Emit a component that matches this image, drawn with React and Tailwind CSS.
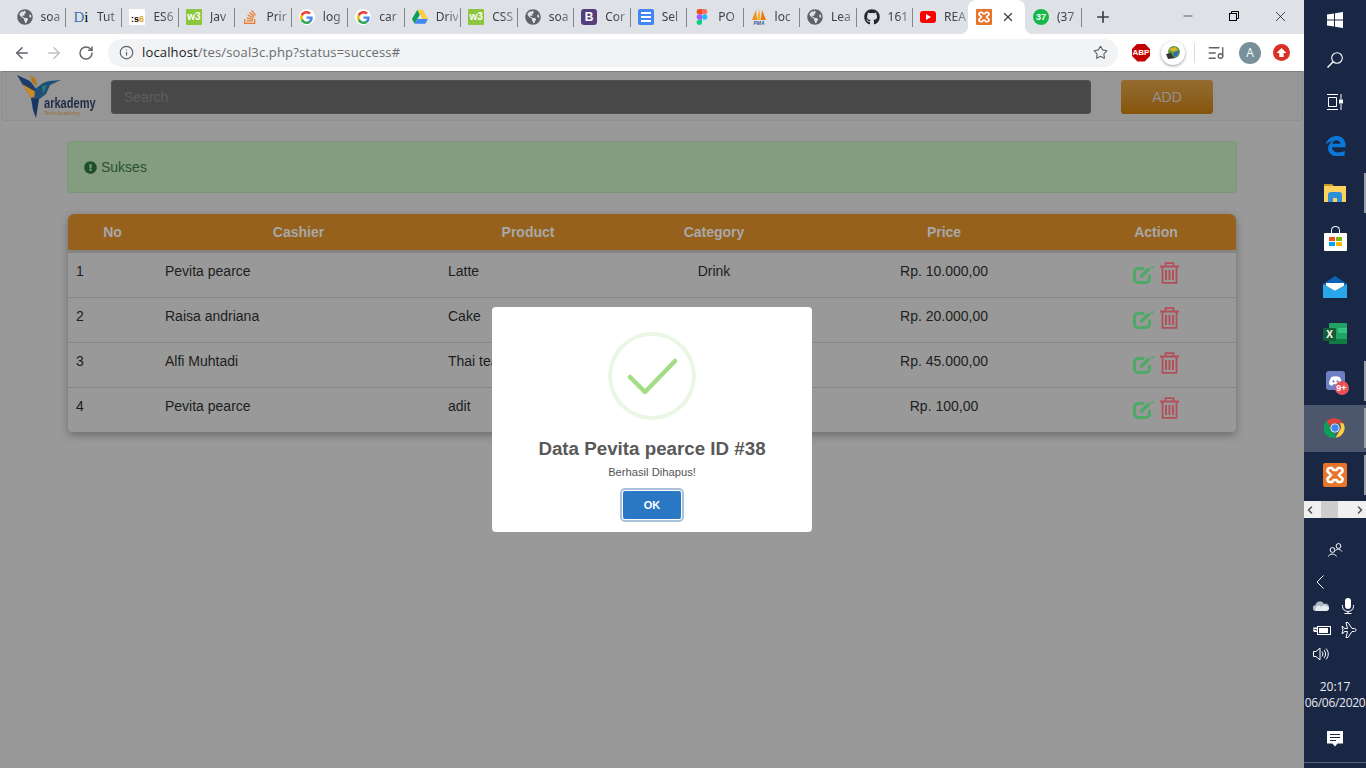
import { ArrowLeft, ArrowRight, RotateCw, Star, Info, Plus, X, Minus, ListMusic, ChevronLeft, ChevronRight } from "lucide-react";
import { FaGlobeAmericas, FaGithub, FaStackOverflow, FaExclamationCircle } from "react-icons/fa";

function Globe() {
  return <FaGlobeAmericas className="w-4 h-4 text-[#5f6368]" />;
}

function GoogleG() {
  return (
    <svg viewBox="0 0 48 48" className="w-[13px] h-[13px]">
      <path fill="#ea4335" d="M24 9.500c3.500 0 6.700 1.200 9.200 3.600l6.900-6.900C35.900 2.400 30.400 0 24 0 14.600 0 6.500 5.400 2.600 13.200l8 6.200C12.500 13.700 17.800 9.500 24 9.500z" />
      <path fill="#4285f4" d="M47 24.500c0-1.600-.1-3.100-.4-4.500H24v9h13c-.6 3-2.200 5.500-4.800 7.200l7.700 6C44.400 38 47 31.800 47 24.500z" />
      <path fill="#fbbc05" d="M10.600 28.600c-.5-1.400-.8-3-.8-4.600s.3-3.200.8-4.600l-8-6.200C.9 16.500 0 20.100 0 24s.9 7.500 2.600 10.800l8-6.200z" />
      <path fill="#34a853" d="M24 48c6.500 0 11.900-2.100 15.900-5.800l-7.700-6c-2.200 1.500-4.900 2.300-8.200 2.300-6.200 0-11.500-4.200-13.400-9.900l-8 6.200C6.500 42.600 14.600 48 24 48z" />
    </svg>
  );
}

function W3() {
  return (
    <div className="w-4 h-4 bg-[#8cc63f] rounded-[1px] flex items-center justify-center text-white text-[10px] leading-none font-bold font-['Liberation_Sans',sans-serif]">
      w3
    </div>
  );
}

function Drive() {
  return (
    <svg viewBox="0 0 24 22" className="w-4 h-4">
      <polygon fill="#0f9d58" points="8,0 0,14 4,21 12,7" />
      <polygon fill="#ffcd40" points="8,0 16,0 24,14 16,14" />
      <polygon fill="#4285f4" points="4,21 8,14 24,14 20,21" />
    </svg>
  );
}

function Figma() {
  return (
    <svg viewBox="0 0 12 18" className="w-4 h-4">
      <path fill="#f24e1e" d="M3 0h3v6H3a3 3 0 0 1 0-6z" />
      <path fill="#ff7262" d="M6 0h3a3 3 0 0 1 0 6H6z" />
      <path fill="#a259ff" d="M3 6h3v6H3a3 3 0 0 1 0-6z" />
      <circle fill="#1abcfe" cx="9" cy="9" r="3" />
      <path fill="#0acf83" d="M3 12h3v3a3 3 0 1 1-3-3z" />
    </svg>
  );
}

function Pma() {
  return (
    <svg viewBox="0 0 16 16" className="w-4 h-4">
      <polygon fill="#f29111" points="1,11 5,1 6,11" />
      <polygon fill="#f7b23b" points="6,11 8,0 10,11" />
      <polygon fill="#e9780c" points="10,11 11,1 15,11" />
      <text x="8" y="16" textAnchor="middle" fontSize="5" fontWeight="700" fontStyle="italic" fill="#3d5a98" fontFamily="Liberation Sans">PMA</text>
    </svg>
  );
}

function Xampp({ size = "w-4 h-4" }) {
  return (
    <svg viewBox="0 0 24 24" className={size}>
      <rect width="24" height="24" rx="2" fill="#e8742a" />
      <path fill="none" stroke="#fff" strokeWidth="2.600" d="M9 5H7a2.500 2.500 0 0 0-1 4.800L8 12l-2 2.200A2.500 2.500 0 0 0 7 19h2l1.500-2h3L15 19h2a2.500 2.500 0 0 0 1-4.800L16 12l2-2.200A2.500 2.500 0 0 0 17 5h-2l-1.500 2h-3z" />
    </svg>
  );
}

const tabs = [
  { icon: <Globe />, label: "soa" },
  { icon: <span className="text-[15px] leading-none text-[#3b73b9] font-['Liberation_Serif',serif]">D<span className="text-black">i</span></span>, label: "Tut" },
  { icon: <div className="w-4 h-4 bg-white flex items-end justify-center text-[9px] leading-[12px] font-bold font-['Liberation_Sans',sans-serif]">:s<span className="text-[#e8a317]">6</span></div>, label: "ES6" },
  { icon: <W3 />, label: "Jav" },
  { icon: <FaStackOverflow className="w-4 h-4 text-[#e87c2c]" />, label: "Prir" },
  { icon: <div className="w-4 h-4 rounded-full bg-white flex items-center justify-center"><GoogleG /></div>, label: "log" },
  { icon: <div className="w-4 h-4 rounded-full bg-white flex items-center justify-center"><GoogleG /></div>, label: "car" },
  { icon: <Drive />, label: "Driv" },
  { icon: <W3 />, label: "CSS" },
  { icon: <Globe />, label: "soa" },
  { icon: <div className="w-4 h-4 rounded-[3px] bg-[#563d7c] text-white text-[12px] leading-4 text-center font-bold font-['Liberation_Sans',sans-serif]">B</div>, label: "Cor" },
  {
    icon: (
      <div className="w-4 h-4 rounded-[2px] bg-[#4285f4] flex flex-col justify-center gap-[2px] px-[3px]">
        <div className="h-[2px] bg-white"></div>
        <div className="h-[2px] bg-white"></div>
        <div className="h-[2px] bg-white"></div>
      </div>
    ),
    label: "Sel",
  },
  { icon: <Figma />, label: "PO" },
  { icon: <Pma />, label: "loc" },
  { icon: <Globe />, label: "Lea" },
  { icon: <FaGithub className="w-4 h-4 text-[#24292e]" />, label: "161" },
  {
    icon: (
      <div className="w-4 h-[12px] rounded-[3px] bg-[#ff0000] flex items-center justify-center">
        <div className="w-0 h-0 border-y-[3px] border-y-transparent border-l-[5px] border-l-white"></div>
      </div>
    ),
    label: "REA",
  },
  { icon: <Xampp />, active: true },
  { icon: <div className="w-4 h-4 rounded-full bg-[#16b84a] text-white text-[9px] leading-4 text-center font-bold font-['Liberation_Sans',sans-serif]">37</div>, label: "(37" },
];

function TabBar() {
  return (
    <div className="h-[34px] bg-[#dee1e6] flex pl-[8.5px] shrink-0">
      {tabs.map((t, i) => (
        <div
          key={i}
          className={
            t.active
              ? "w-[56.47px] h-[34px] bg-white rounded-t-lg flex items-center pl-2 shrink-0 relative"
              : "w-[56.47px] h-[34px] flex items-center pl-2 relative shrink-0"
          }
        >
          {/* separator sits on the left edge of the tab */}
          {i > 0 && !t.active && i !== 18 && (
            <div className="absolute left-0 top-[8px] w-px h-[19px] bg-[#80868b]"></div>
          )}
          {t.active && (
            <>
              <div className="absolute bottom-0 -left-2 w-2 h-2 bg-[radial-gradient(circle_at_0_0,transparent_8px,white_8px)]"></div>
              <div className="absolute bottom-0 -right-2 w-2 h-2 bg-[radial-gradient(circle_at_100%_0,transparent_8px,white_8px)]"></div>
            </>
          )}
          <div className="w-4 h-4 flex items-center justify-center shrink-0">{t.icon}</div>
          {t.active ? (
            <X size={14} strokeWidth={2.2} className="ml-[9px] text-[#3c4043]" />
          ) : (
            <div className="ml-2 w-[22px] whitespace-nowrap text-[12px] text-[#3c4043] font-['Noto_Sans',sans-serif] [mask-image:linear-gradient(90deg,#000_40%,rgba(0,0,0,0.45))]">
              {t.label}
            </div>
          )}
        </div>
      ))}
      <div className="w-px h-[19px] mt-[8px] bg-[#80868b]"></div>
      <div className="ml-3 flex items-center">
        <Plus size={18} strokeWidth={2.2} className="text-[#3c4043]" />
      </div>
      <div className="ml-auto flex items-start pt-2 pr-px">
        <div className="w-[46px] h-4 flex items-center justify-center"><Minus size={14} strokeWidth={1} className="text-black" /></div>
        <div className="w-[46px] h-4 flex items-center justify-center">
          <svg viewBox="0 0 10 10" className="w-[10px] h-[10px]" fill="none" stroke="#000" strokeWidth="1">
            <rect x="0.500" y="2.500" width="7" height="7" />
            <path d="M2.500 2.500v-2h7v7h-2" />
          </svg>
        </div>
        <div className="w-[46px] h-4 flex items-center justify-center"><X size={17} strokeWidth={1} className="text-black" /></div>
      </div>
    </div>
  );
}

function Toolbar() {
  return (
    <div className="h-[37px] bg-white flex items-center shrink-0 pl-[13px]">
      <ArrowLeft size={18} strokeWidth={2} className="text-[#5f6368]" />
      <ArrowRight size={18} strokeWidth={2} className="ml-[14px] text-[#bdc1c6]" />
      <RotateCw size={16} strokeWidth={2.2} className="ml-[15px] text-[#5f6368]" />
      <div className="ml-[14px] w-[1010px] h-[28px] rounded-full bg-[#f1f3f4] flex items-center pl-[11px] pr-[10px]">
        <Info size={15} strokeWidth={2} className="text-[#5f6368]" />
        <div className="ml-2 text-[13px] tracking-[0.15px] text-[#6a6e72] font-['Open_Sans',sans-serif] whitespace-nowrap">
          <span className="text-[#202124]">localhost</span>/tes/soal3c.php?status=success#
        </div>
        <Star size={15} strokeWidth={1.8} className="ml-auto text-[#5f6368]" />
      </div>
      {/* extensions */}
      <div className="ml-[14px] w-[18px] h-[18px] bg-[#c30000] [clip-path:polygon(30%_0,70%_0,100%_30%,100%_70%,70%_100%,30%_100%,0_70%,0_30%)] text-white text-[8px] leading-[18px] text-center font-bold font-['Liberation_Sans',sans-serif]">ABP</div>
      <div className="ml-[11px] w-[24px] h-[24px] rounded-full bg-white shadow-[0_1px_3px_rgba(0,0,0,0.4)] flex items-center justify-center">
        <svg viewBox="0 0 16 16" className="w-4 h-4">
          <circle cx="9" cy="7" r="6" fill="#5c9a3c" />
          <path fill="#d9b52c" d="M4 4l6-2 3 3-5 2z" />
          <path fill="#2f6db5" d="M9 7l5-1-2 5-4 1z" />
          <path fill="#333" d="M1 9l5-1 2 4 3 1-8 1z" />
        </svg>
      </div>
      <div className="ml-[9px] w-px h-[20px] bg-[#dadce0]"></div>
      <ListMusic size={18} strokeWidth={1.8} className="ml-[12px] text-[#5f6368]" />
      <div className="ml-[14px] w-[22px] h-[22px] rounded-full bg-[#78909c] text-white text-[12px] leading-[22px] text-center font-['Open_Sans',sans-serif]">A</div>
      <div className="ml-[12px] w-[17px] h-[17px] rounded-full bg-[#d93025] flex items-center justify-center">
        <svg viewBox="0 0 10 10" className="w-[11px] h-[11px]" fill="#fff">
          <polygon points="5,1 9.500,5.500 7,5.500 7,9 3,9 3,5.500 0.500,5.500" />
        </svg>
      </div>
    </div>
  );
}

function Logo() {
  return (
    <div className="w-[81px] h-[48px] bg-[#969696] shrink-0 relative">
      <svg viewBox="0 0 48 48" className="absolute left-0 top-0 w-12 h-12">
        <polygon fill="#1d3c6a" points="1,3 14,9 24,22 16,27 8,15" />
        <polygon fill="#b5761f" points="14,3 20,7 21,15 16,10" />
        <polygon fill="#c98a25" points="6,12 20,20 24,23 15,26" />
        <polygon fill="#1e4f78" points="19,17 27,11 33,9 45,8 34,13 30,22 18,31" />
        <polygon fill="#2a7a78" points="26,14 31,13 27,22" />
        <polygon fill="#16365f" points="15,26 23,27 20,46 17,38" />
      </svg>
      <div className="absolute left-[28px] top-[23px] text-[14px] leading-[16px] font-bold text-[#1e2c48] font-['Liberation_Sans',sans-serif] origin-left scale-x-[0.79] whitespace-nowrap">arkademy</div>
      <div className="absolute left-[28px] top-[37px] text-[5.500px] leading-[8px] text-[#9a6a2a] font-['Liberation_Sans',sans-serif] whitespace-nowrap">Tech Academy</div>
    </div>
  );
}

function EditIcon() {
  return (
    <svg viewBox="0 0 21 18" className="w-[21px] h-[18px]" fill="none" stroke="#4ea866" strokeWidth="3" strokeLinecap="round">
      <path d="M10 2.500H5a3.500 3.500 0 0 0-3.500 3.500v7A3.500 3.500 0 0 0 5 16.500h8a3.500 3.500 0 0 0 3.500-3.500v-3" />
      <path d="M8.500 10l7-6.500" strokeWidth="3.400" />
      <path d="M19 1.500l.5-.5" strokeWidth="2.200" />
    </svg>
  );
}

function TrashIcon() {
  return (
    <svg viewBox="0 0 19 22" className="w-[19px] h-[22px]" fill="none" stroke="#b34f58" strokeWidth="1.800">
      <path d="M0 4.500h19" />
      <path d="M5.500 4V1.200h8V4" />
      <path d="M2.500 5v15.800h14V5" />
      <path d="M6 8v10M9.500 8v10M13 8v10" strokeWidth="1.900" />
    </svg>
  );
}

const rows = [
  ["1", "Pevita pearce", "Latte", "Drink", "Rp. 10.000,00"],
  ["2", "Raisa andriana", "Cake", "Food", "Rp. 20.000,00"],
  ["3", "Alfi Muhtadi", "Thai tea", "Drink", "Rp. 45.000,00"],
  ["4", "Pevita pearce", "adit", "Food", "Rp. 100,00"],
];

function ProductTable() {
  return (
    <div className="mt-[21px] mx-px rounded-t-md rounded-b-sm overflow-hidden shadow-[0_3px_8px_rgba(0,0,0,0.3)]">
      <table className="w-full table-fixed border-separate border-spacing-0 text-[14px] text-[#1c1e20]">
        <colgroup>
          <col className="w-[89px]" />
          <col className="w-[283px]" />
          <col className="w-[176px]" />
          <col className="w-[196px]" />
          <col className="w-[264px]" />
          <col className="w-[160px]" />
        </colgroup>
        <thead>
          <tr className="h-[36px] bg-[#96611c] text-[#a8a8a8] font-bold">
            <th className="pt-px">No</th>
            <th className="pt-px">Cashier</th>
            <th className="pt-px">Product</th>
            <th className="pt-px">Category</th>
            <th className="pt-px">Price</th>
            <th className="pt-px">Action</th>
          </tr>
        </thead>
        <tbody>
          {rows.map((r, i) => {
            const line = i === 0 ? "border-t-[3px] border-[#858585]" : "border-t border-[#858585]";
            return (
              <tr key={i} className={i === 0 ? "h-[47px]" : "h-[45px]"}>
                <td className={"pl-2 pb-2 " + line}>{r[0]}</td>
                <td className={"pl-2 pb-2 " + line}>{r[1]}</td>
                <td className={"pl-2 pb-2 " + line}>{r[2]}</td>
                <td className={"text-center pb-2 " + line}>{r[3]}</td>
                <td className={"text-center pb-2 " + line}>{r[4]}</td>
                <td className={"pb-[5px] " + line}>
                  <div className="flex items-end justify-center gap-[6px]">
                    <EditIcon />
                    <TrashIcon />
                  </div>
                </td>
              </tr>
            );
          })}
        </tbody>
      </table>
    </div>
  );
}

function SuccessModal() {
  return (
    <div className="absolute inset-0 flex items-center justify-center">
      <div className="w-[320px] h-[225px] bg-white rounded-[4px] flex flex-col items-center pt-[25px] font-['Liberation_Sans',sans-serif]">
        <div className="w-[88px] h-[88px] rounded-full border-4 border-[#ebf6e5] flex items-center justify-center shrink-0">
          <svg viewBox="0 0 52 40" className="w-[52px] h-[40px] mt-[2px] ml-[2px]" fill="none" stroke="#a5dc86" strokeWidth="4.500" strokeLinecap="round" strokeLinejoin="round">
            <path d="M3 20l15 15L48 4" />
          </svg>
        </div>
        <div className="mt-[15px] text-[18.750px] leading-[28px] font-bold text-[#595959] whitespace-nowrap">Data Pevita pearce ID #38</div>
        <div className="mt-[1px] text-[11.200px] leading-[16px] text-[#545454]">Berhasil Dihapus!</div>
        <div className="mt-[8px] p-[1px] rounded-[5px] border-2 border-[#a9c1da]">
          <div className="w-[58px] h-[28px] bg-[#2a78c4] rounded-[2px] text-white text-[11px] leading-[28px] font-bold text-center">OK</div>
        </div>
      </div>
    </div>
  );
}

function Page() {
  return (
    <div className="flex-1 bg-[#999999] relative font-['Liberation_Sans',sans-serif]">
      {/* navbar */}
      <div className="h-[50px] mx-px bg-[#969696] rounded-b border border-t-[#7d7d7d] border-x-[#8f8f8f] border-b-[#8f8f8f] flex items-start pl-[14px]">
        <Logo />
        <div className="ml-[14px] mt-[8px] w-[980px] h-[34px] bg-[#484848] border border-[#505050] rounded-[3px] pl-3 text-[14px] leading-[32px] text-[#5f5f5f]">
          Search
        </div>
        <div className="ml-[30px] mt-[8px] w-[92px] h-[34px] rounded-[3px] bg-gradient-to-b from-[#946c2f] to-[#875508] text-center text-[14px] leading-[34px] text-[#929292]">
          ADD
        </div>
      </div>
      <div className="px-[67px] pt-[20px]">
        <div className="h-[52px] bg-[#849c80] border border-[#7b9678] rounded flex items-center pl-4 text-[14px] text-[#2a5230]">
          <FaExclamationCircle className="w-[13px] h-[13px] mr-1 text-[#1f4f2a]" />
          Sukses
        </div>
        <ProductTable />
      </div>
      <SuccessModal />
    </div>
  );
}

function TaskItem({ children, active, running }) {
  return (
    <div className={active ? "h-[47px] pb-[2px] bg-[#4c566c] flex items-center justify-center relative" : "h-[47px] pb-[2px] flex items-center justify-center relative"}>
      {children}
      {running && <div className="absolute right-0 top-[3px] w-[2px] h-[40px] bg-[#9b9fa8]"></div>}
    </div>
  );
}

function Taskbar() {
  return (
    <div className="w-[62px] bg-[#1a2744] flex flex-col shrink-0 text-white font-['Open_Sans',sans-serif]">
      <div className="h-10 flex items-center justify-center">
        <svg viewBox="0 0 16 16" className="w-4 h-4" fill="#fff">
          <polygon points="0,2.500 7,1.500 7,7.500 0,7.500" />
          <polygon points="8,1.300 16,0 16,7.500 8,7.500" />
          <polygon points="0,8.500 7,8.500 7,14.500 0,13.500" />
          <polygon points="8,8.500 16,8.500 16,16 8,14.700" />
        </svg>
      </div>
      <div className="h-10 flex items-center justify-center">
        <svg viewBox="0 0 16 16" className="w-4 h-4" fill="none" stroke="#fff" strokeWidth="1.100">
          <circle cx="10" cy="6" r="5.300" />
          <path d="M6.200 9.800L.5 15.500" strokeWidth="1.400" />
        </svg>
      </div>
      <div className="h-[43px] flex items-center justify-center">
        <svg viewBox="0 0 16 16" className="w-4 h-4" fill="none" stroke="#fff" strokeWidth="1">
          <path d="M0 .5h11M0 15.500h11M1.500 3.500h8v9h-8z" />
          <path d="M14 0v5M14 10v6" />
          <rect x="12.500" y="6" width="3" height="3" fill="#fff" />
        </svg>
      </div>
      <TaskItem>
        <svg viewBox="0 0 24 24" className="w-[21px] h-[21px]">
          <path fill="#0a78d7" d="M1 11C2 5 7 1 13 1c6 0 10 4 10.500 9.500V14H8c.3 4 3.500 6 7 6 3 0 5.500-.8 7.500-2v5c-2 1-5 1.500-7.500 1.500C9 24.500 3.500 21 3.500 15c0-3 1.700-6 5-8C5 7.500 2.500 9 1 11zM8.500 10h9c0-2.500-2-4-4.500-4S8.800 7.500 8.500 10z" />
        </svg>
      </TaskItem>
      <TaskItem running>
        <svg viewBox="0 0 22 18" className="w-[22px] h-[18px]">
          <path fill="#c9962a" d="M0 0h8l2 2h12v3H0z" />
          <rect y="2" width="22" height="16" fill="#fbd35e" />
          <path fill="#2f8fd8" d="M4 18v-7a3 3 0 0 1 3-3h8a3 3 0 0 1 3 3v7h-5v-4H9v4z" />
        </svg>
      </TaskItem>
      <TaskItem>
        <div className="w-[23px] h-[18px] mt-1 bg-white rounded-[1px] relative grid grid-cols-2 gap-px p-[5px] content-center">
          <div className="absolute -top-[7px] left-[7px] w-[9px] h-[9px] rounded-t-full border border-white border-b-0"></div>
          <div className="h-[4px] bg-[#f25022]"></div>
          <div className="h-[4px] bg-[#7fba00]"></div>
          <div className="h-[4px] bg-[#00a4ef]"></div>
          <div className="h-[4px] bg-[#ffb900]"></div>
        </div>
      </TaskItem>
      <TaskItem>
        <svg viewBox="0 0 24 22" className="w-6 h-[22px]">
          <polygon fill="#0c63b5" points="12,0 24,8 24,10 0,10 0,8" />
          <polygon fill="#fff" points="3,7 21,7 21,10 12,15 3,10" />
          <polygon fill="#28a8ea" points="0,8 12,15 24,8 24,22 0,22" />
        </svg>
      </TaskItem>
      <TaskItem>
        <div className="relative w-6 h-[21px]">
          <div className="absolute left-[6px] top-0 w-[18px] h-[21px] bg-[#21a366] rounded-[1px]"></div>
          <div className="absolute left-[15px] top-[5px] w-[9px] h-[5px] bg-[#33c481]"></div>
          <div className="absolute left-[6px] bottom-0 w-[18px] h-[5px] bg-[#107c41]"></div>
          <div className="absolute left-0 top-[5px] w-[13px] h-[13px] bg-[#185c37] rounded-[1px] text-[10px] leading-[13px] text-center font-bold font-['Liberation_Sans',sans-serif]">X</div>
        </div>
      </TaskItem>
      <TaskItem running>
        <div className="relative w-[19px] h-[19px] rounded-[3px] bg-[#6d7fc4] flex items-center justify-center">
          <svg viewBox="0 0 16 12" className="w-[13px] h-[10px]" fill="#fff">
            <path d="M3 1c3-1 7-1 10 0 2 3 3 6 3 9-1 1-3 2-4 2l-1-2H5l-1 2c-1 0-3-1-4-2 0-3 1-6 3-9z" />
            <circle cx="5.500" cy="6.500" r="1.300" fill="#6d7fc4" />
            <circle cx="10.500" cy="6.500" r="1.300" fill="#6d7fc4" />
          </svg>
          <div className="absolute -right-[4px] -bottom-[5px] w-[14px] h-[14px] rounded-full bg-[#e9505a] text-[9px] leading-[14px] text-center font-bold font-['Liberation_Sans',sans-serif]">9+</div>
        </div>
      </TaskItem>
      <TaskItem active running>
        <svg viewBox="0 0 48 48" className="w-[22px] h-[22px]">
          <path fill="#db4437" d="M24 3a21 21 0 0 1 18.200 10.500H24a10.500 10.500 0 0 0-10 7.500L6 8.700A21 21 0 0 1 24 3z" />
          <path fill="#ffcd40" d="M42.200 13.500A21 21 0 0 1 25 45l9-15.700a10.500 10.500 0 0 0-1-15.800z" />
          <path fill="#0f9d58" d="M25 45A21 21 0 0 1 6 8.700l9 15.700a10.500 10.500 0 0 0 10 10z" />
          <circle cx="24" cy="24" r="10" fill="#fff" />
          <circle cx="24" cy="24" r="8" fill="#4285f4" />
        </svg>
      </TaskItem>
      <TaskItem running>
        <Xampp size="w-6 h-6" />
      </TaskItem>
      {/* horizontal scroller */}
      <div className="mt-[2px] h-[17px] bg-[#f0f0f0] flex items-center justify-between text-[#505050] relative">
        <ChevronLeft size={12} strokeWidth={3} />
        <div className="absolute left-[17px] w-[17px] h-[17px] bg-[#cdcdcd]"></div>
        <ChevronRight size={12} strokeWidth={3} />
      </div>
      {/* people */}
      <div className="h-[56px] pt-[7px] flex items-center justify-center">
        <svg viewBox="0 0 15 14" className="w-[15px] h-[14px]" fill="none" stroke="#fff" strokeWidth="1">
          <circle cx="10.500" cy="3" r="2.400" />
          <path d="M7.500 7.500c1-1.500 4.500-2 6.500 1" />
          <circle cx="4.500" cy="7" r="2.400" />
          <path d="M.5 13.500c.5-3 6.500-3.500 8 0" />
        </svg>
      </div>
      <div className="h-[16px] pl-[12px] flex items-center">
        <svg viewBox="0 0 8 14" className="w-2 h-[14px]" fill="none" stroke="#fff" strokeWidth="1">
          <path d="M7.500.5L1 7l6.500 6.500" />
        </svg>
      </div>
      {/* tray */}
      <div className="mt-[4px] grid grid-cols-[28px_1fr] grid-rows-3 h-[72px] pl-[9px] items-center">
        <svg viewBox="0 0 16 10" className="w-4 h-[10px]">
          <path fill="#aeb6c4" d="M3 10a3 3 0 0 1-.5-6A4.500 4.500 0 0 1 11 3a3.500 3.500 0 0 1 5 3.500A3.500 3.500 0 0 1 13 10z" />
          <path fill="#e6e9ee" d="M3 10h10a3 3 0 0 0 3-3.200A5 5 0 0 0 8 6a3 3 0 0 0-5 4z" />
        </svg>
        <svg viewBox="0 0 12 16" className="w-3 h-4 ml-px" fill="none" stroke="#fff" strokeWidth="1">
          <rect x="3" y="0" width="6" height="11" rx="3" fill="#fff" stroke="none" />
          <path d="M.5 7v1.500a5 4.500 0 0 0 11 0V7M6 13v2.500M2.500 15.500h7" />
        </svg>
        <svg viewBox="0 0 18 11" className="w-[18px] h-[11px]" fill="none" stroke="#fff" strokeWidth="1">
          <path d="M0 5.500h3M1 2v2M3 2v2M1 3.500h3v3H1z" />
          <rect x="4.500" y="1.500" width="13" height="8" />
          <rect x="6" y="3" width="9" height="5" fill="#fff" stroke="none" />
        </svg>
        <svg viewBox="0 0 16 16" className="w-4 h-4" fill="none" stroke="#fff" strokeWidth="1">
          <path d="M1 4.500h1l1.500 2h3L5 .5h2l4 6h2.500c2 0 2 3 0 3H11l-4 6H5l1.500-6h-3L2 11.500H1L2 8z" />
        </svg>
        <svg viewBox="0 0 16 14" className="w-4 h-[14px]" fill="none" stroke="#fff" strokeWidth="1">
          <path d="M.5 4.500h2.500L7 1v12L3 9.500H.5z" />
          <path d="M9 4.500c1.200 1.500 1.200 3.500 0 5M11 3c2 2.500 2 5.500 0 8M13 1.500c3 3.500 3 7.500 0 11" />
        </svg>
      </div>
      <div className="mt-[13px] text-[12px] leading-[16px] text-center text-[#e8eaee] whitespace-nowrap">20:17</div>
      <div className="text-[12px] leading-[16px] text-center text-[#e8eaee] whitespace-nowrap tracking-[-0.3px]">06/06/2020</div>
      <div className="mt-[20px] flex justify-center">
        <svg viewBox="0 0 16 16" className="w-4 h-4">
          <path fill="#fff" d="M0 0h16v12.500h-5.500L8 15.500l-2.500-3H0z" />
          <path stroke="#1a2744" strokeWidth="1" d="M3 3.500h10M3 6.500h10M3 9.500h6" />
        </svg>
      </div>
      <div className="mt-[15px] h-px bg-[#5a6478]"></div>
    </div>
  );
}

export default function App() {
  return (
    <div className="w-[1366px] h-[768px] flex overflow-hidden">
      <div className="flex-1 flex flex-col min-w-0 font-['Open_Sans',sans-serif]">
        <TabBar />
        <Toolbar />
        <Page />
      </div>
      <Taskbar />
    </div>
  );
}
